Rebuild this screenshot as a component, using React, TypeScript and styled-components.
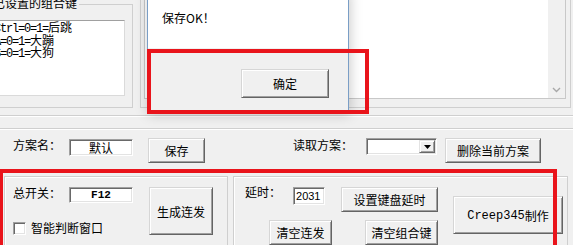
import React from "react";
import styled, { createGlobalStyle } from "styled-components";

const CJK = `"Noto Sans CJK SC", "Microsoft YaHei", sans-serif`;
const ETCH = "#cfcfcf";

const GlobalStyle = createGlobalStyle`
  html, body { margin: 0; padding: 0; background: #f0f0f0; overflow: hidden; }
  body { font-family: ${CJK}; font-size: 12px; color: #000; }
  #root { width: 573px; height: 245px; }
`;

const Screen = styled.div`
  position: relative;
  width: 573px;
  height: 245px;
  overflow: hidden;
  background: #f0f0f0;
  display: flex;
  flex-direction: column;
  font-family: ${CJK};
  font-size: 12px;
  line-height: 14px;
  color: #000;
  & > * { flex-shrink: 0; }
`;

/* ---------- top area ---------- */
const TopRow = styled.div`
  display: flex;
  align-items: flex-start;
  height: 108px;
`;

const KeyGroup = styled.fieldset`
  box-sizing: border-box;
  width: 153px;
  min-width: 0;
  margin: -2px 0 0 -20px;
  padding: 10px 7px 11px 0;
  border: 1px solid ${ETCH};
`;

const GroupTitle = styled.legend`
  margin-left: 10px;
  padding: 0 2px;
  font-size: 12px;
  line-height: 12px;
  white-space: nowrap;
  position: relative;
  top: -1px;
`;

const KeyList = styled.div`
  box-sizing: border-box;
  height: 76px;
  background: #fff;
  border: 1px solid;
  border-color: #a0a0a0 #dadada #dadada #a0a0a0;
  padding-left: 12px;
  font-size: 12px;
  line-height: 12.5px;
  white-space: nowrap;
  overflow: hidden;
`;

const KeyLine = styled.div`
  height: 12.5px;
`;

const Mono = styled.span<{ $size?: number; $ls?: number; $bold?: boolean }>`
  font-family: "Liberation Mono", "DejaVu Sans Mono", monospace;
  font-size: ${(p) => p.$size ?? 12}px;
  letter-spacing: ${(p) => p.$ls ?? 0}px;
  font-weight: ${(p) => (p.$bold ? 700 : 400)};
`;

const DisplayFrame = styled.div`
  box-sizing: border-box;
  width: 431px;
  height: 108px;
  margin-left: 7px;
  padding: 0 4px 0 3px;
  border: 1px solid ${ETCH};
  border-top: none;
`;

const TextArea = styled.div`
  box-sizing: border-box;
  height: 100px;
  margin-top: -1px;
  border: 1px solid #c8c8c8;
  background: #fff;
  display: flex;
  justify-content: flex-end;
`;

const ScrollTrack = styled.div`
  width: 17px;
  background: #f0f0f0;
  display: flex;
  flex-direction: column;
  justify-content: flex-end;
`;

const ScrollArrow = styled.div`
  height: 17px;
  display: flex;
  align-items: center;
  justify-content: center;
`;

const Divider = styled.div`
  margin-top: 7px;
  border-top: 1px solid ${ETCH};
  box-shadow: 0 1px 0 #fff;
`;

/* ---------- scheme row ---------- */
const SchemeSection = styled.div`
  margin-top: 12px;
  border-top: 1px solid ${ETCH};
  box-shadow: inset 0 1px 0 #fff;
  padding: 9px 0 0 13px;
  display: flex;
  align-items: flex-start;
  height: 25px;
`;

const Label = styled.span<{ $ml?: number; $mt?: number }>`
  margin-left: ${(p) => p.$ml ?? 0}px;
  margin-top: ${(p) => p.$mt ?? 0}px;
  font-size: 12px;
  line-height: 14px;
  white-space: nowrap;
`;

const Field = styled.div<{ $w: number; $h: number; $ml?: number; $mt?: number; $align?: string }>`
  box-sizing: border-box;
  width: ${(p) => p.$w}px;
  height: ${(p) => p.$h}px;
  margin-left: ${(p) => p.$ml ?? 0}px;
  margin-top: ${(p) => p.$mt ?? 0}px;
  background: #fff;
  border: 1px solid;
  border-color: #a0a0a0 #fff #fff #a0a0a0;
  box-shadow: inset 1px 1px 0 #696969, inset -1px -1px 0 #e3e3e3;
  display: flex;
  align-items: center;
  justify-content: ${(p) => p.$align ?? "center"};
  padding: 0 2px;
  font-size: 12px;
  line-height: 12px;
  white-space: nowrap;
  overflow: hidden;
`;

const Digits = styled.span`
  font-family: "Liberation Sans", Arial, sans-serif;
  font-size: 11px;
`;

const Combo = styled(Field)`
  justify-content: flex-end;
  padding: 0 1px 0 0;
`;

const DropButton = styled.div`
  box-sizing: border-box;
  width: 16px;
  height: 13px;
  background: #f0f0f0;
  border: 1px solid;
  border-color: #e3e3e3 #696969 #696969 #e3e3e3;
  box-shadow: inset 1px 1px 0 #fff, inset -1px -1px 0 #a0a0a0;
  display: flex;
  align-items: center;
  justify-content: center;
`;

const Button = styled.button<{ $w: number; $h: number; $ml?: number; $mt?: number }>`
  box-sizing: border-box;
  width: ${(p) => p.$w}px;
  height: ${(p) => p.$h}px;
  margin: ${(p) => p.$mt ?? 0}px 0 0 ${(p) => p.$ml ?? 0}px;
  padding: 1px 0 0 0;
  background: #f0f0f0;
  border: 1px solid;
  border-color: #d6d6d6 #646464 #646464 #d6d6d6;
  box-shadow: inset 1px 1px 0 #fff, inset -1px -1px 0 #a0a0a0;
  font-family: ${CJK};
  font-size: 12px;
  line-height: 14px;
  color: #000;
  display: flex;
  align-items: center;
  justify-content: center;
  white-space: nowrap;
  flex-shrink: 0;
`;

/* ---------- bottom controls ---------- */
const BottomRow = styled.div`
  margin-top: 13px;
  display: flex;
  align-items: flex-start;
`;

const Panel = styled.div<{ $w: number; $ml: number; $pl: number }>`
  box-sizing: border-box;
  width: ${(p) => p.$w}px;
  height: 80px;
  margin-left: ${(p) => p.$ml}px;
  padding: 10px 0 0 ${(p) => p.$pl}px;
  border: 1px solid ${ETCH};
  border-bottom: none;
  box-shadow: inset 1px 1px 0 #fff;
  display: flex;
  align-items: flex-start;
`;

const Column = styled.div`
  display: flex;
  flex-direction: column;
`;

const Line = styled.div<{ $mt?: number }>`
  display: flex;
  align-items: flex-start;
  margin-top: ${(p) => p.$mt ?? 0}px;
`;

const CheckBox = styled.div`
  box-sizing: border-box;
  width: 13px;
  height: 13px;
  background: #fff;
  border: 1px solid;
  border-color: #a0a0a0 #fff #fff #a0a0a0;
  box-shadow: inset 1px 1px 0 #696969, inset -1px -1px 0 #e3e3e3;
`;

/* ---------- message box overlay ---------- */
const MsgBox = styled.div`
  position: absolute;
  left: 147px;
  top: -10px;
  width: 202px;
  height: 122px;
  box-sizing: border-box;
  border: 1px solid #7a9ec6;
  background: #fff;
  display: flex;
  flex-direction: column;
  box-shadow: 1px 2px 12px rgba(0, 0, 0, 0.22);
  z-index: 2;
`;

const MsgBody = styled.div`
  box-sizing: border-box;
  height: 57px;
  padding: 20px 0 0 14px;
  font-size: 12px;
  line-height: 14px;
`;

const WideMark = styled.span`
  display: inline-block;
  width: 12px;
  text-align: center;
`;

const MsgFooter = styled.div`
  flex: 1;
  background: #f0f0f0;
  display: flex;
  justify-content: flex-end;
  align-items: flex-start;
  padding: 21px 19px 0 0;
`;

const Highlight = styled.div<{ $x: number; $y: number; $w: number; $h: number }>`
  position: absolute;
  left: ${(p) => p.$x}px;
  top: ${(p) => p.$y}px;
  width: ${(p) => p.$w}px;
  height: ${(p) => p.$h}px;
  box-sizing: border-box;
  border: 4px solid #e9141b;
  pointer-events: none;
  z-index: 3;
`;

export default function App() {
  return (
    <>
      <GlobalStyle />
      <Screen>
        <TopRow>
          <KeyGroup>
            <GroupTitle>已设置的组合键</GroupTitle>
            <KeyList>
              <KeyLine>
                <Mono $ls={-1.2}>Ctrl=0=1=</Mono>后跳
              </KeyLine>
              <KeyLine>
                <Mono $ls={-1.2}>A=0=1=</Mono>大蹦
              </KeyLine>
              <KeyLine>
                <Mono $ls={-1.2}>S=0=1=</Mono>大狗
              </KeyLine>
            </KeyList>
          </KeyGroup>
          <DisplayFrame>
            <TextArea>
              <ScrollTrack>
                <ScrollArrow>
                  <svg width="9" height="6" viewBox="0 0 9 6">
                    <polyline points="1,1 4.5,4.5 8,1" fill="none" stroke="#a8a8a8" strokeWidth="1.4" />
                  </svg>
                </ScrollArrow>
              </ScrollTrack>
            </TextArea>
          </DisplayFrame>
        </TopRow>
        <Divider />

        <SchemeSection>
          <Label>方案名：</Label>
          <Field $w={64} $h={17} $ml={8} $mt={1}>默认</Field>
          <Button $w={57} $h={25} $ml={15}>保存</Button>
          <Label $ml={88}>读取方案：</Label>
          <Combo $w={71} $h={17} $ml={13}>
            <DropButton>
              <svg width="7" height="4" viewBox="0 0 7 4">
                <polygon points="0,0 7,0 3.5,4" fill="#000" />
              </svg>
            </DropButton>
          </Combo>
          <Button $w={96} $h={25} $ml={8}>删除当前方案</Button>
        </SchemeSection>

        <BottomRow>
          <Panel $w={224} $ml={4} $pl={8}>
            <Column>
              <Line>
                <Label $mt={-1}>总开关：</Label>
                <Field $w={64} $h={16} $ml={8}>
                  <Mono $size={11} $bold>F12</Mono>
                </Field>
              </Line>
              <Line $mt={19}>
                <CheckBox />
                <Label $ml={5} $mt={-1}>智能判断窗口</Label>
              </Line>
            </Column>
            <Button $w={64} $h={48} $ml={16}>生成连发</Button>
          </Panel>

          <Panel $w={335} $ml={5} $pl={0}>
            <Column>
              <Line>
                <Label $ml={11} $mt={-2}>延时：</Label>
                <Field $w={32} $h={18} $ml={12} $align="flex-start">
                  <Digits>2031</Digits>
                </Field>
                <Button $w={97} $h={25} $ml={16}>设置键盘延时</Button>
              </Line>
              <Line $mt={8}>
                <Button $w={63} $h={25} $ml={35}>清空连发</Button>
                <Button $w={73} $h={25} $ml={33}>清空组合键</Button>
              </Line>
            </Column>
            <Button $w={110} $h={38} $ml={15} $mt={9}>
              <Mono>Creep345</Mono>制作
            </Button>
          </Panel>
        </BottomRow>

        <MsgBox>
          <MsgBody>
            保存OK<WideMark>！</WideMark>
          </MsgBody>
          <MsgFooter>
            <Button $w={88} $h={29}>确定</Button>
          </MsgFooter>
        </MsgBox>

        <Highlight $x={147} $y={49} $w={222} $h={65} />
        <Highlight $x={-1} $y={169} $w={558} $h={100} />
      </Screen>
    </>
  );
}
